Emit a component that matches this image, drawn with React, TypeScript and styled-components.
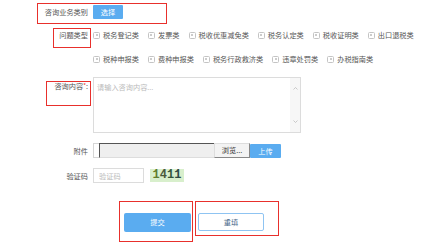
import React from "react";
import styled, { createGlobalStyle } from "styled-components";

const Global = createGlobalStyle`
  html, body { margin: 0; padding: 0; background: #fff; }
  body {
    font-family: "Noto Sans CJK SC", "Noto Sans", sans-serif;
    font-size: 7.2px;
    color: #555;
  }
  * { box-sizing: border-box; }
`;

const Form = styled.div`
  position: relative;
  width: 446px;
  height: 245px;
  padding-top: 5px;
  overflow: hidden;
`;

const Row = styled.div<{ $mt?: number; $align?: string }>`
  display: flex;
  align-items: ${(p) => p.$align ?? "center"};
  margin-top: ${(p) => p.$mt ?? 0}px;
`;

const Label = styled.div<{ $pt?: number }>`
  width: 88px;
  flex: none;
  text-align: right;
  padding-top: ${(p) => p.$pt ?? 0}px;
  line-height: 14px;
  color: #555;
  white-space: nowrap;
`;

const Star = styled.span`
  color: #e8302c;
  font-size: 6px;
  vertical-align: top;
`;

const Content = styled.div`
  margin-left: 5px;
  display: flex;
  align-items: center;
`;

const BlueButton = styled.button<{ $w: number; $h: number }>`
  width: ${(p) => p.$w}px;
  height: ${(p) => p.$h}px;
  padding: 0;
  border: none;
  border-radius: 1px;
  background: #5aacf0;
  color: #fff;
  font-family: inherit;
  font-size: 7.2px;
  line-height: ${(p) => p.$h}px;
  cursor: pointer;
`;

const Options = styled.div`
  width: 345px;
  display: flex;
  flex-wrap: wrap;
  row-gap: 10px;
  margin-left: 5px;
`;

const Option = styled.label`
  display: flex;
  align-items: center;
  height: 14px;
  margin-right: 9px;
  color: #555;
  white-space: nowrap;
`;

const Box = styled.span`
  width: 7px;
  height: 7px;
  margin-right: 3px;
  border: 1px solid #c4c4c4;
  border-radius: 1.5px;
  display: flex;
  align-items: center;
  justify-content: center;
  &::after {
    content: "";
    width: 2px;
    height: 2px;
    border-radius: 50%;
    background: #bbb;
  }
`;

const TextBox = styled.div`
  margin-left: 5px;
  width: 208px;
  height: 56px;
  border: 1px solid #dcdcdc;
  display: flex;
`;

const Area = styled.textarea`
  flex: 1;
  border: none;
  outline: none;
  resize: none;
  padding: 5px 3px;
  font-family: inherit;
  font-size: 7.2px;
  line-height: 8px;
  color: #555;
  &::placeholder { color: #bbb; }
`;

const Track = styled.div`
  width: 10px;
  background: #f7f7f7;
  display: flex;
  flex-direction: column;
  justify-content: space-between;
  align-items: center;
  padding: 9px 0;
`;

const FileFrame = styled.div`
  display: flex;
  align-items: center;
  height: 15px;
  padding-left: 5px;
  border: 1px solid #d6d6d6;
  border-right: none;
`;

const FileField = styled.div`
  width: 115px;
  height: 15px;
  background: #efefef;
  border-top: 1px solid #555;
  border-left: 1px solid #555;
  border-bottom: 1px solid #ddd;
`;

const Browse = styled.button`
  width: 36px;
  height: 15px;
  padding: 0;
  background: #f3f3f3;
  border: 1px solid #888;
  border-top-color: #ddd;
  border-left-color: #ddd;
  color: #333;
  font-family: inherit;
  font-size: 7.2px;
  line-height: 13px;
`;

const Input = styled.input`
  margin-left: 5px;
  width: 51px;
  height: 15px;
  border: 1px solid #dcdcdc;
  padding: 0 5px;
  font-family: inherit;
  font-size: 7.2px;
  outline: none;
  &::placeholder { color: #bbb; }
`;

const Captcha = styled.div`
  margin-left: 6px;
  width: 34px;
  height: 13px;
  background: #d8efcc;
  display: flex;
  align-items: center;
  justify-content: center;
  font-family: "Liberation Mono", monospace;
  font-weight: bold;
  font-size: 12px;
  line-height: 13px;
`;

const Digit = styled.span<{ $c: string }>`
  color: ${(p) => p.$c};
`;

const Actions = styled.div`
  display: flex;
  align-items: flex-start;
  gap: 7px;
  margin-top: 30px;
  padding-left: 124px;
`;

const Submit = styled(BlueButton)`
  border-radius: 2px;
`;

const Reset = styled.button`
  width: 66px;
  height: 18px;
  padding: 0;
  background: #fff;
  border: 1px solid #8fc4f2;
  border-radius: 2px;
  color: #4a6a8a;
  font-family: inherit;
  font-size: 7.2px;
  line-height: 16px;
`;

const Mark = styled.div<{ $x: number; $y: number; $w: number; $h: number }>`
  position: absolute;
  left: ${(p) => p.$x}px;
  top: ${(p) => p.$y}px;
  width: ${(p) => p.$w}px;
  height: ${(p) => p.$h}px;
  border: 1.5px solid #e8302c;
  pointer-events: none;
`;

const Chevron = ({ up }: { up?: boolean }) => (
  <svg width="5" height="3" viewBox="0 0 5 3">
    <polyline
      points={up ? "0.5,2.5 2.5,0.5 4.5,2.5" : "0.5,0.5 2.5,2.5 4.5,0.5"}
      fill="none"
      stroke="#b5b5b5"
      strokeWidth="0.7"
    />
  </svg>
);

const types = [
  "税务登记类",
  "发票类",
  "税收优惠减免类",
  "税务认定类",
  "税收证明类",
  "出口退税类",
  "税种申报类",
  "费种申报类",
  "税务行政救济类",
  "违章处罚类",
  "办税指南类",
];

const marks = [
  { x: 37, y: 3, w: 130, h: 21 },
  { x: 53, y: 28, w: 38, h: 20 },
  { x: 46, y: 81, w: 45, h: 25 },
  { x: 119, y: 201, w: 74, h: 41 },
  { x: 195, y: 201, w: 84, h: 35 },
];

export default function App() {
  return (
    <>
      <Global />
      <Form>
        <Row>
          <Label>咨询业务类别</Label>
          <Content>
            <BlueButton $w={30} $h={14}>选择</BlueButton>
          </Content>
        </Row>

        <Row $mt={9} $align="flex-start">
          <Label>问题类型</Label>
          <Options>
            {types.map((t) => (
              <Option key={t}>
                <Box />
                {t}
              </Option>
            ))}
          </Options>
        </Row>

        <Row $mt={11} $align="flex-start">
          <Label $pt={2}>
            咨询内容<Star>*</Star>:
          </Label>
          <TextBox>
            <Area placeholder="请输入咨询内容..." />
            <Track>
              <Chevron up />
              <Chevron />
            </Track>
          </TextBox>
        </Row>

        <Row $mt={10}>
          <Label>附件</Label>
          <Content>
            <FileFrame>
              <FileField />
              <Browse>浏览...</Browse>
            </FileFrame>
            <BlueButton $w={31} $h={14}>上传</BlueButton>
          </Content>
        </Row>

        <Row $mt={10}>
          <Label>验证码</Label>
          <Input placeholder="验证码" />
          <Captcha>
            <Digit $c="#5f7d2c">1</Digit>
            <Digit $c="#4b5a3c">4</Digit>
            <Digit $c="#36583a">1</Digit>
            <Digit $c="#2f4a45">1</Digit>
          </Captcha>
        </Row>

        <Actions>
          <Submit $w={67} $h={19}>提交</Submit>
          <Reset>重填</Reset>
        </Actions>

        {marks.map((m, i) => (
          <Mark key={i} $x={m.x} $y={m.y} $w={m.w} $h={m.h} />
        ))}
      </Form>
    </>
  );
}
